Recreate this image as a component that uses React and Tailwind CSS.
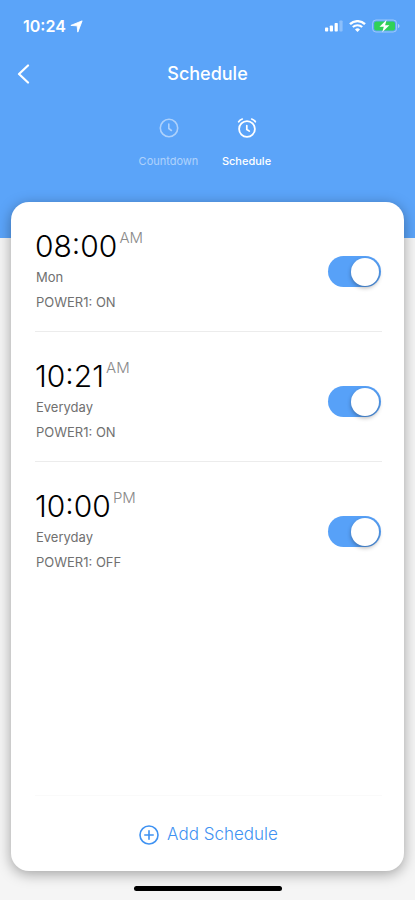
import React, { useState } from 'react';

const initialSchedules = [
  { id: 1, time: '08:00', period: 'AM', repeat: 'Mon', action: 'POWER1: ON', enabled: true },
  { id: 2, time: '10:21', period: 'AM', repeat: 'Everyday', action: 'POWER1: ON', enabled: true },
  { id: 3, time: '10:00', period: 'PM', repeat: 'Everyday', action: 'POWER1: OFF', enabled: true },
];

function StatusBar() {
  return (
    <div className="flex h-[52px] items-center justify-between pl-[23px] pr-[15px] text-white">
      <div className="flex items-center gap-1">
        <span className="text-base font-semibold leading-5">10:24</span>
        <svg width="13" height="13" viewBox="0 0 12 12" fill="currentColor" stroke="currentColor" strokeWidth="0.8" strokeLinejoin="round" aria-hidden="true">
          <path d="M11.2.8 7.2 11.2 6.600 5.400.8 5z" />
        </svg>
      </div>
      <div className="flex items-center gap-1.5">
        <svg width="18" height="12" viewBox="0 0 18 12" fill="currentColor" aria-hidden="true">
          <rect x="0" y="7.5" width="3.2" height="4" rx="0.8" />
          <rect x="4.8" y="5.5" width="3.2" height="6" rx="0.8" />
          <rect x="9.6" y="3" width="3.2" height="8.5" rx="0.8" />
          <rect x="14.4" y="0.5" width="3.2" height="11" rx="0.8" opacity="0.3" />
        </svg>
        <svg width="17" height="12" viewBox="0 0 17 12" fill="none" stroke="currentColor" aria-hidden="true">
          <path d="M1 4.2a10.8 10.8 0 0 1 15 0" strokeWidth="2.4" />
          <path d="M3.8 7.1a6.8 6.8 0 0 1 9.4 0" strokeWidth="2.1" />
          <path d="M8.5 12 6 9.4a3.7 3.7 0 0 1 5 0z" fill="currentColor" stroke="none" />
        </svg>
        <svg width="28" height="14" viewBox="0 0 28 14" aria-hidden="true">
          <rect x="0.6" y="1" width="24" height="12" rx="3.4" fill="none" stroke="#fff" strokeOpacity="0.4" />
          <rect x="2.2" y="2.6" width="20.8" height="8.8" rx="2" fill="#30d158" />
          <path d="M26 5v4c1-.4 1.5-1.1 1.5-2S27 5.4 26 5z" fill="#fff" fillOpacity="0.5" />
          <path d="M14.6.8 7.5 7.8h4.3l-1.600 5.400 7.200-7h-4.300z" fill="#fff" />
        </svg>
      </div>
    </div>
  );
}

function ClockIcon() {
  return (
    <svg width="20" height="20" viewBox="0 0 20 20" fill="none" stroke="currentColor" strokeLinecap="round" aria-hidden="true">
      <circle cx="10" cy="10" r="8.7" strokeWidth="1.6" />
      <path d="M9.8 6v4.500l2.600 2" strokeWidth="1.6" />
    </svg>
  );
}

function AlarmIcon() {
  return (
    <svg width="20" height="20" viewBox="0 0 20 20" fill="none" stroke="currentColor" strokeLinecap="round" aria-hidden="true">
      <circle cx="10" cy="11" r="7.9" strokeWidth="1.8" />
      <path d="M9.8 7.5v4l2.500 1.600" strokeWidth="1.700" />
      <path d="M1.600 3.800c.8-1.400 2-2.300 3.700-2.800M18.400 3.800c-.8-1.400-2-2.300-3.700-2.800" strokeWidth="1.700" />
    </svg>
  );
}

function ScheduleRow({ item, isLast, onToggle }) {
  return (
    <li
      className={`flex h-[130px] items-center justify-between border-b pt-1.5 ${
        isLast ? 'border-transparent' : 'border-[#ececec]'
      }`}
    >
      <div>
        <p className="flex items-start gap-0.5">
          <span className="text-[30px] font-light leading-9 text-black">{item.time}</span>
          <span className="text-[15px] font-light leading-5 text-[#8a8a8a]">{item.period}</span>
        </p>
        <p className="mt-[3px] pl-px text-[13px] leading-5 text-[#707070]">{item.repeat}</p>
        <p className="mt-[5px] pl-px text-[13px] leading-5 text-[#707070]">{item.action}</p>
      </div>
      <input
        type="checkbox"
        role="switch"
        aria-label={`${item.time} ${item.period} ${item.repeat}`}
        checked={item.enabled}
        onChange={() => onToggle(item.id)}
        className="mr-px mt-1 flex h-[31px] w-[53px] cursor-pointer appearance-none items-center rounded-full bg-[#d5d5d5] px-0.5 before:size-7 before:rounded-full before:bg-white before:shadow-[0_2px_4px_rgba(0,0,0,0.3)] checked:justify-end checked:bg-[#57a1f8]"
      />
    </li>
  );
}

const App = () => {
  const [schedules, setSchedules] = useState(initialSchedules);
  const [tab, setTab] = useState('schedule');

  const toggle = (id) => {
    setSchedules((prev) => prev.map((s) => (s.id === id ? { ...s, enabled: !s.enabled } : s)));
  };

  const tabClass = (name) =>
    `flex w-[78px] cursor-pointer flex-col items-center gap-[15px] text-[11px] leading-4 text-white ${
      tab === name ? 'font-medium' : 'opacity-50'
    }`;

  return (
    <div className="flex min-h-screen flex-col bg-[#f5f5f5] font-['Inter','Liberation_Sans',sans-serif]">
      <header className="bg-[#5ba4f9] pb-[69px]">
        <StatusBar />
        <div className="grid h-11 grid-cols-[48px_1fr_48px] items-center text-white">
          <button type="button" aria-label="Back" className="cursor-pointer pl-4">
            <svg width="14" height="20" viewBox="0 0 14 20" fill="none" stroke="currentColor" strokeWidth="2.2" strokeLinecap="round" strokeLinejoin="round" aria-hidden="true">
              <path d="M12 1.5 3 10l9 8.500" />
            </svg>
          </button>
          <h1 className="text-center text-lg font-medium">Schedule</h1>
        </div>
        <nav className="mt-[22px] flex justify-center">
          <button type="button" className={tabClass('countdown')} onClick={() => setTab('countdown')}>
            <ClockIcon />
            Countdown
          </button>
          <button type="button" className={tabClass('schedule')} onClick={() => setTab('schedule')}>
            <AlarmIcon />
            Schedule
          </button>
        </nav>
      </header>

      <main className="mx-[11px] -mt-9 flex flex-1 flex-col rounded-[18px] bg-white pl-6 pr-[22px] shadow-[0_3px_14px_rgba(0,0,0,0.35)]">
        <ul className="flex-1">
          {schedules.map((item, i) => (
            <ScheduleRow key={item.id} item={item} isLast={i === schedules.length - 1} onToggle={toggle} />
          ))}
        </ul>
        <button
          type="button"
          className="flex h-[76px] cursor-pointer items-center justify-center gap-2 border-t border-[#fafafa] pt-0.5 text-[17px] font-light text-[#3f92f2]"
        >
          <svg width="20" height="20" viewBox="0 0 20 20" fill="none" stroke="currentColor" strokeWidth="1.6" strokeLinecap="round" aria-hidden="true">
            <circle cx="10" cy="10" r="9" />
            <path d="M10 5.8v8.4M5.8 10h8.4" />
          </svg>
          Add Schedule
        </button>
      </main>

      <footer className="flex h-[29px] justify-center pt-[15px]">
        <div className="h-[5px] w-[148px] rounded-full bg-black" />
      </footer>
    </div>
  );
};

export default App;
